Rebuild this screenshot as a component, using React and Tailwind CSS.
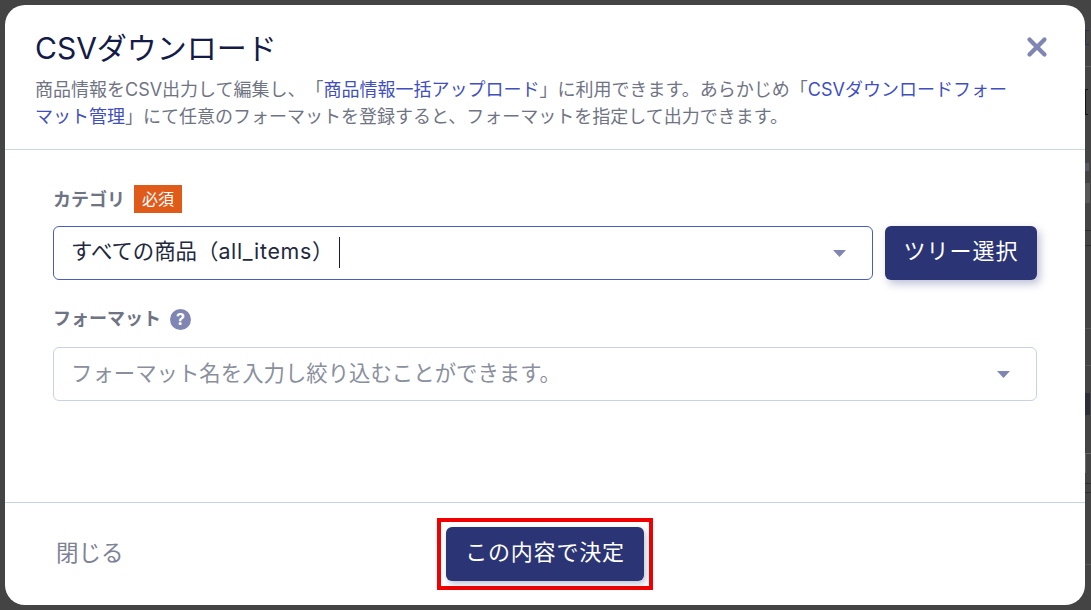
import { X } from "lucide-react";

const font = "font-['Inter','Noto_Sans_CJK_JP',sans-serif] [text-spacing-trim:space-all]";

function Caret() {
  return (
    <svg width="13" height="7" viewBox="0 0 13 7" className="shrink-0">
      <path d="M0 0h13L6.5 7z" fill="#7f86b3" />
    </svg>
  );
}

function SelectBox({ focused, children, className }) {
  return (
    <div
      className={`flex h-[54px] items-center justify-between rounded-[6px] border pl-[17px] pr-[26px] ${
        focused ? "border-[#4a5cc0]" : "border-[#c9d2e5]"
      } ${className || ""}`}
    >
      {children}
      <Caret />
    </div>
  );
}

// the dimmed page behind the dialog, only a sliver of it shows
function BackdropSliver() {
  return (
    <div className="flex h-[610px] w-[6px] shrink-0 flex-col overflow-hidden">
      <div className="mt-[30px] h-[15px] w-[4px] border-y border-l border-[#2a3050]" />
      <div className="mt-[21px] h-px bg-[#5a5a5a]" />
      <div className="mt-[22px] h-[26px] w-[3px] border-y border-l border-[#141414]" />
      <div className="mt-[48px] h-[8px] w-[4px] bg-[#565a66]" />
      <div className="mt-[12px] h-[20px] w-[5px] bg-[#575757]" />
      <div className="mt-[27px] h-px bg-[#2e2e2e]" />
      <div className="mt-[14px] h-px bg-[#2e2e2e]" />
      <div className="mt-[82px] h-px bg-[#565656]" />
      <div className="mt-[36px] h-px bg-[#565656]" />
      <div className="mt-[27px] h-[22px] w-[5px] bg-[#2c2f3a]" />
      <div className="mt-[38px] h-[20px] w-[6px] border-t border-l border-[#666666]" />
      <div className="mt-[10px] h-[10px] border-y border-[#2e2e2e]" />
      <div className="mt-[71px] h-px bg-[#565656]" />
    </div>
  );
}

export default function App() {
  return (
    <div className={`${font} flex h-[610px] w-[1091px] overflow-hidden bg-[#444444] pl-[5px]`}>
      <div className="my-[5px] flex h-[600px] w-[1080px] shrink-0 flex-col rounded-[20px] bg-white">
        <header className="flex h-[145px] shrink-0 justify-between border-b border-[#cdd5e0] pl-[30px] pr-[33px] pt-[25px]">
          <div className="w-[975px]">
            <h2 className="text-[30px] leading-[36px] text-[#141b47]">CSVダウンロード</h2>
            <p className="mt-[10px] text-[18px] leading-[27px] text-[#6f7484]">
              商品情報をCSV出力して編集し、「<a className="text-[#3f4fbf]">商品情報一括アップロード</a>」に利用できます。あらかじめ「<a className="text-[#3f4fbf]">CSVダウンロードフォーマット管理</a>」にて任意のフォーマットを登録すると、フォーマットを指定して出力できます。
            </p>
          </div>
          <X size={30} strokeWidth={3.4} className="mt-[2px] text-[#7f86b3]" />
        </header>

        <main className="flex-1 px-[48px] pt-[35px]">
          <div className="flex items-center gap-[9px]">
            <span className="pt-[1px] text-[18px] font-bold leading-[27px] text-[#6f7484]">カテゴリ</span>
            <span className="flex h-[28px] w-[48px] items-center justify-center bg-[#e05a1a] text-[16px] text-white">必須</span>
          </div>
          <div className="mt-[13px] flex gap-[12px]">
            <SelectBox focused className="flex-1">
              <div className="flex items-center text-[#23283f]">
                <span className="pb-[4px] text-[21.4px]">
                  すべての商品（<span className="tracking-[0.7px]">all_items</span>）
                </span>
                <span className="ml-[6px] h-[31px] w-px bg-[#141b47]" />
              </div>
            </SelectBox>
            <button className="h-[54px] w-[152px] rounded-[6px] bg-[#2b3575] pb-[3px] text-[22px] tracking-[1px] text-white shadow-[3px_4px_8px_rgba(43,53,117,0.3)]">
              ツリー選択
            </button>
          </div>
          <div className="mt-[25px] flex items-center gap-[9px]">
            <span className="text-[18px] font-bold leading-[28px] text-[#6f7484]">フォーマット</span>
            <span className="flex h-[21px] w-[21px] items-center justify-center rounded-full bg-[#7f86b3] text-[16px] font-bold leading-none text-white">?</span>
          </div>
          <SelectBox className="mt-[14px]">
            <span className="pb-[1px] text-[21.4px] text-[#8a8f9e]">フォーマット名を入力し絞り込むことができます。</span>
          </SelectBox>
        </main>

        <footer className="grid h-[103px] shrink-0 grid-cols-3 items-center border-t border-[#c9d2e5] px-[51px]">
          <span className="pb-[2px] text-[22.5px] text-[#7d8296]">閉じる</span>
          <div className="flex justify-center">
            <div className="shrink-0 border-4 border-[#f00000] p-[5px]">
              <button className="block h-[54px] w-[198px] rounded-[6px] bg-[#2b3575] pb-[3px] text-[22px] tracking-[0.8px] text-white shadow-[2px_3px_6px_rgba(43,53,117,0.3)]">
                この内容で決定
              </button>
            </div>
          </div>
          <span />
        </footer>
      </div>
      <BackdropSliver />
    </div>
  );
}
